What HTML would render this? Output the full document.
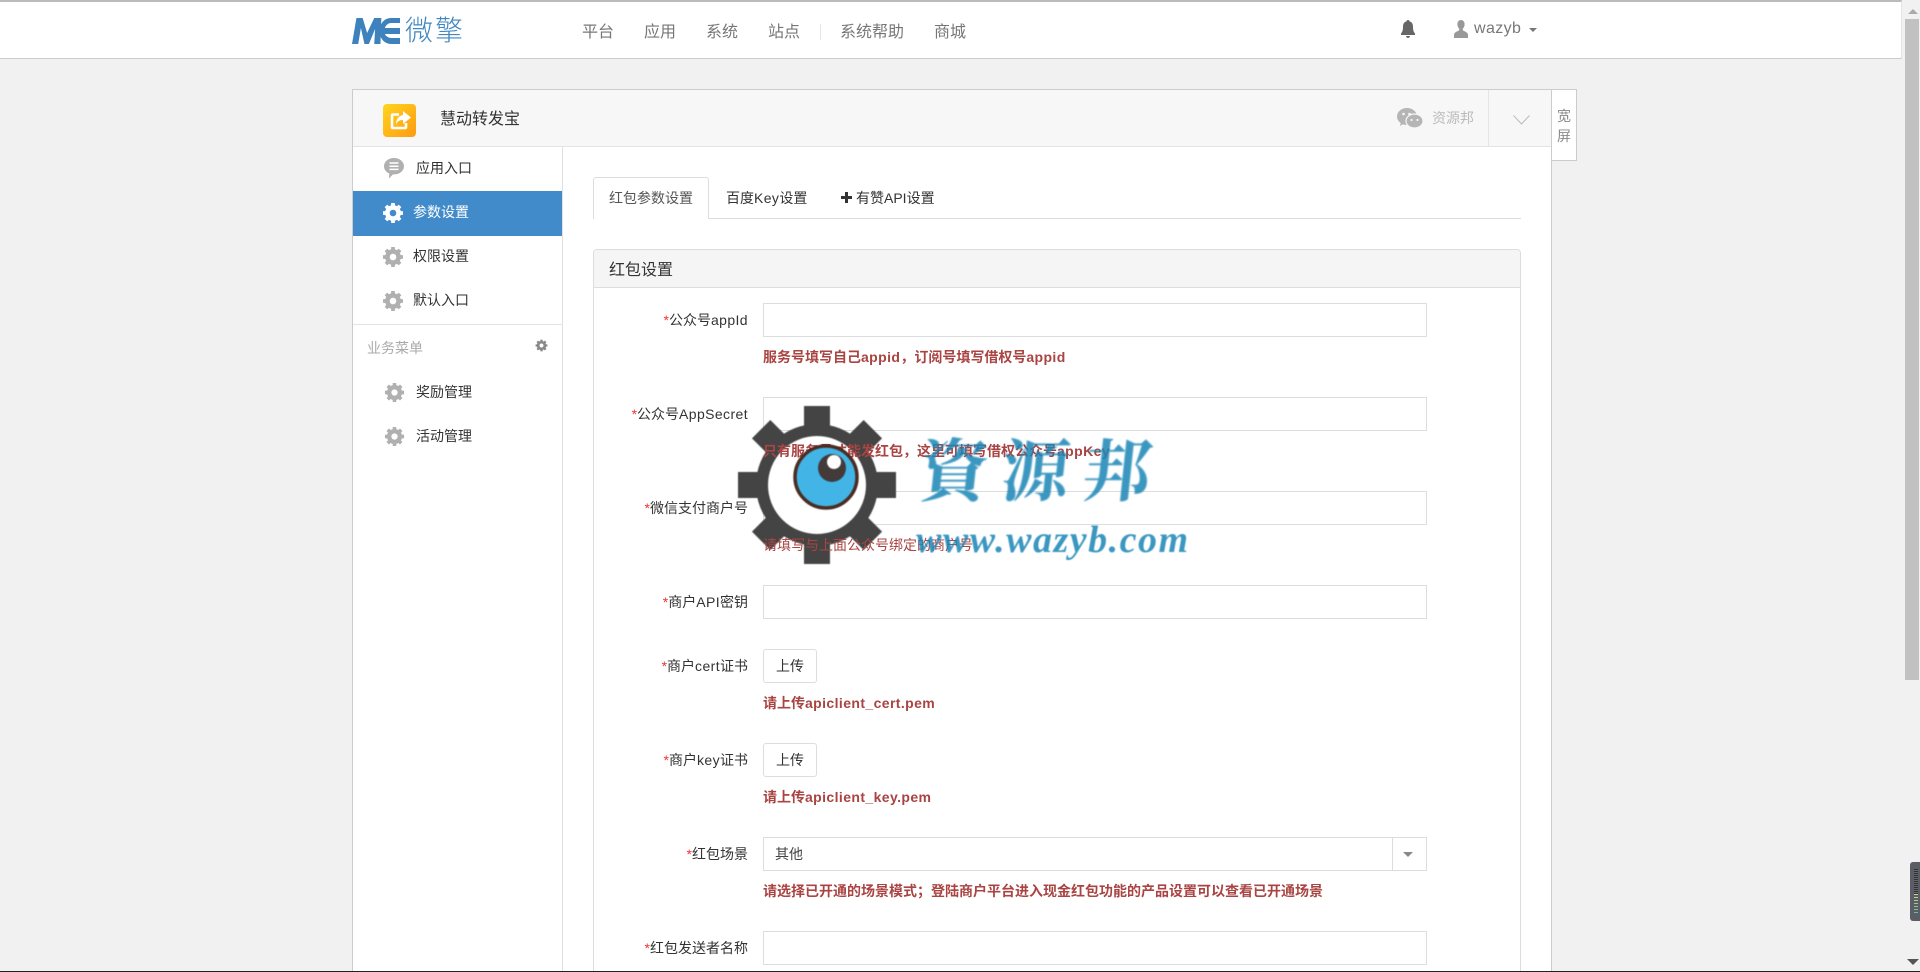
<!DOCTYPE html>
<html lang="zh-CN"><head><meta charset="utf-8"><title>慧动转发宝</title>
<style>
*{box-sizing:border-box}
html,body{margin:0;padding:0;width:1920px;height:972px;overflow:hidden;background:#f1f1f1}
body{position:relative;font:14px/20px "Liberation Sans","Noto Sans CJK SC",sans-serif;color:#333}
.a{position:absolute;white-space:nowrap}
.nav{top:22px;font-size:16px;line-height:22px;color:#777}
.side{font-size:14px;line-height:20px;color:#333}
.lab{right:1172px;height:20px;line-height:20px;color:#333;text-align:right;z-index:3}
.lab i{font-style:normal;color:#e33}
.l{letter-spacing:.4px}
.inp{left:763px;width:664px;height:34px;background:#fff;border:1px solid #ddd}
.help{left:763px;color:#a94442;font-weight:bold;line-height:20px;z-index:5}
.btn{left:763px;width:54px;height:34px;background:#fff;border:1px solid #ddd;border-radius:3px;text-align:center;line-height:32px;color:#333}
svg{display:block}
</style></head><body>
<svg width="0" height="0" style="position:absolute"><defs>
<g id="gear"><circle r="5.6" fill="none" stroke="currentColor" stroke-width="4.6"/>
<g fill="currentColor"><rect x="-1.9" y="-10" width="3.8" height="4" rx=".5"/><rect x="-1.9" y="-10" width="3.8" height="4" rx=".5" transform="rotate(45)"/><rect x="-1.9" y="-10" width="3.8" height="4" rx=".5" transform="rotate(90)"/><rect x="-1.9" y="-10" width="3.8" height="4" rx=".5" transform="rotate(135)"/><rect x="-1.9" y="-10" width="3.8" height="4" rx=".5" transform="rotate(180)"/><rect x="-1.9" y="-10" width="3.8" height="4" rx=".5" transform="rotate(225)"/><rect x="-1.9" y="-10" width="3.8" height="4" rx=".5" transform="rotate(270)"/><rect x="-1.9" y="-10" width="3.8" height="4" rx=".5" transform="rotate(315)"/></g></g>
</defs></svg>

<!-- top bar -->
<div class="a" style="left:0;top:0;width:1902px;height:59px;background:#fff;border-top:2px solid #bbb;border-bottom:1px solid #ccc;border-right:1px solid #e4e4e4"></div>
<svg class="a" style="left:352px;top:17px" width="48" height="27" viewBox="0 0 54 27" preserveAspectRatio="none"><path fill="#3d82bd" d="M0 27 5 1h7l5 15L25 1h8l-1 26h-7l1-15-7 15h-5L10 11 7 27z"/><path fill="#3d82bd" d="M54 1H44C36 1 31 7 31 14s5 13 13 13h10v-6H44c-3 0-6-2-7-4h17v-6H37c1-3 4-5 7-5h10z"/></svg>
<div class="a" style="left:405px;top:15px;font-size:28px;line-height:31px;color:#3f87c0;letter-spacing:2px;font-weight:300">微擎</div>
<div class="a nav" style="left:582px">平台</div>
<div class="a nav" style="left:644px">应用</div>
<div class="a nav" style="left:706px">系统</div>
<div class="a nav" style="left:768px">站点</div>
<div class="a" style="left:820px;top:24px;width:1px;height:16px;background:#e6e6e6"></div>
<div class="a nav" style="left:840px">系统帮助</div>
<div class="a nav" style="left:934px">商城</div>
<svg class="a" style="left:1401px;top:20px" width="14" height="18" viewBox="0 0 14 18"><path fill="#666" d="M7 0c1 0 1.5.6 1.5 1.4C11 2 12 4 12 7c0 3 .6 5 2 6.5V15H0v-1.500C1.400 12 2 10 2 7c0-3 1-5 3.500-5.600C5.500.6 6 0 7 0zM5 16h4c0 1-1 2-2 2s-2-1-2-2z"/></svg>
<svg class="a" style="left:1454px;top:20px" width="14" height="18" viewBox="0 0 14 18"><path fill="#999" d="M7 0c2.300 0 3.600 1.800 3.600 4.200 0 2-.8 3.500-1.800 4.500v1.500C10.500 11.500 14 12 14 15v3H0v-3c0-3 3.500-3.500 5.200-4.800V8.700C4.200 7.700 3.400 6.200 3.400 4.200 3.400 1.800 4.700 0 7 0z"/></svg>
<div class="a" style="left:1474px;top:18px;font-size:16px;line-height:22px;color:#777;letter-spacing:.4px">wazyb</div>
<div class="a" style="left:1529px;top:28px;width:0;height:0;border:4px solid transparent;border-top-color:#777;border-bottom:0"></div>

<!-- scrollbar -->
<div class="a" style="left:1903px;top:2px;width:17px;height:970px;background:#f1f1f1"></div>
<div class="a" style="left:1908px;top:9px;width:0;height:0;border:5px solid transparent;border-bottom:5px solid #aaa;border-top:0"></div>
<div class="a" style="left:1905px;top:19px;width:14px;height:661px;background:#c1c1c1"></div>
<div class="a" style="left:1907px;top:959px;width:0;height:0;border:6px solid transparent;border-top:6px solid #555;border-bottom:0"></div>

<!-- main panel -->
<div class="a" style="left:352px;top:89px;width:1200px;height:883px;background:#fff;border:1px solid #ccc;border-bottom:0"></div>
<div class="a" style="left:353px;top:90px;width:1198px;height:57px;background:#f7f7f7;border-bottom:1px solid #e4e4e4"></div>
<div class="a" style="left:1488px;top:90px;width:1px;height:56px;background:#e4e4e4"></div>
<div class="a" style="left:383px;top:104px;width:33px;height:33px;border-radius:4px;background:linear-gradient(135deg,#ffd51f,#ff9a12)"></div>
<svg class="a" style="left:383px;top:104px" width="33" height="33" viewBox="0 0 33 33"><path fill="none" stroke="#fff" stroke-width="2.600" d="M16 10.500H10c-.6 0-1 .4-1 1V23c0 .6.4 1 1 1h12c.6 0 1-.4 1-1v-4"/><path fill="#fff" d="M20 7l8 6.500-8 6.500v-4c-4 0-6 1.500-7 5 0-6 2.500-9 7-10z"/></svg>
<div class="a" style="left:440px;top:109px;font-size:16px;line-height:22px;color:#333">慧动转发宝</div>
<svg class="a" style="left:1397px;top:108px" width="26" height="21" viewBox="0 0 26 21"><ellipse cx="10" cy="8.500" rx="10" ry="8.500" fill="#b5b5b5"/><path fill="#b5b5b5" d="M4 14l-1 4 5-3z"/><ellipse cx="17.500" cy="13" rx="8.500" ry="7" fill="#b5b5b5" stroke="#f7f7f7" stroke-width="1.200"/><circle cx="6.500" cy="6" r="1.300" fill="#f7f7f7"/><circle cx="12.500" cy="6" r="1.300" fill="#f7f7f7"/><circle cx="14.500" cy="12" r="1.100" fill="#f7f7f7"/><circle cx="20.500" cy="12" r="1.100" fill="#f7f7f7"/></svg>
<div class="a" style="left:1432px;top:108px;color:#bbb">资源邦</div>
<svg class="a" style="left:1513px;top:115px" width="17" height="10" viewBox="0 0 17 10"><path fill="none" stroke="#bbb" stroke-width="1" d="M.5.500l8 8.500 8-8.500"/></svg>
<div class="a" style="left:1551px;top:89px;width:26px;height:72px;background:#fff;border:1px solid #ccc;color:#888;text-align:center;padding-top:16px;line-height:20px;white-space:normal;font-size:14px">宽<br>屏</div>

<!-- sidebar -->
<div class="a" style="left:562px;top:147px;width:1px;height:825px;background:#e0e0e0"></div>
<svg class="a" style="left:384px;top:158px" width="20" height="21" viewBox="0 0 20 21"><path fill="#b0b0b0" d="M10 0c5.500 0 10 3.600 10 8.200s-4.500 8.200-10 8.200h-1L5 20.500l.3-5C2 14 0 11.400 0 8.200 0 3.600 4.500 0 10 0z"/><path stroke="#fff" stroke-width="1.500" d="M5.500 5h9M5.500 8.200h9M5.500 11.400h9"/></svg>
<div class="a side" style="left:416px;top:158px">应用入口</div>
<div class="a" style="left:353px;top:191px;width:209px;height:45px;background:#428bca"></div>
<svg class="a" style="left:382px;top:202px;color:#fff" width="22" height="22" viewBox="-11 -11 22 22"><use href="#gear"/></svg>
<div class="a side" style="left:413px;top:202px;color:#fff">参数设置</div>
<svg class="a" style="left:382px;top:246px;color:#b0b0b0" width="22" height="22" viewBox="-11 -11 22 22"><use href="#gear"/></svg>
<div class="a side" style="left:413px;top:246px">权限设置</div>
<svg class="a" style="left:382px;top:290px;color:#b0b0b0" width="22" height="22" viewBox="-11 -11 22 22"><use href="#gear"/></svg>
<div class="a side" style="left:413px;top:290px">默认入口</div>
<div class="a" style="left:353px;top:324px;width:209px;height:1px;background:#e4e4e4"></div>
<div class="a side" style="left:367px;top:338px;color:#aaa">业务菜单</div>
<svg class="a" style="left:535px;top:339px;color:#888" width="13" height="13" viewBox="-11 -11 22 22"><use href="#gear"/></svg>
<svg class="a" style="left:384px;top:382px;color:#b0b0b0" width="21" height="21" viewBox="-11 -11 22 22"><use href="#gear"/></svg>
<div class="a side" style="left:416px;top:382px">奖励管理</div>
<svg class="a" style="left:384px;top:426px;color:#b0b0b0" width="21" height="21" viewBox="-11 -11 22 22"><use href="#gear"/></svg>
<div class="a side" style="left:416px;top:426px">活动管理</div>

<!-- tabs -->
<div class="a" style="left:593px;top:218px;width:928px;height:1px;background:#ddd"></div>
<div class="a" style="left:593px;top:177px;width:116px;height:42px;background:#fff;border:1px solid #ddd;border-bottom:0;border-radius:3px 3px 0 0"></div>
<div class="a" style="left:609px;top:188px;color:#555">红包参数设置</div>
<div class="a" style="left:726px;top:188px;color:#333">百度<span class="l">Key</span>设置</div>
<svg class="a" style="left:841px;top:192px" width="11" height="11" viewBox="0 0 11 11"><path fill="#333" d="M4 0h3v4h4v3H7v4H4V7H0V4h4z"/></svg>
<div class="a" style="left:856px;top:188px;color:#333">有赞API设置</div>

<!-- form panel -->
<div class="a" style="left:593px;top:249px;width:928px;height:730px;background:#fff;border:1px solid #ddd;border-radius:4px"></div>
<div class="a" style="left:594px;top:250px;width:926px;height:38px;background:#f5f5f5;border-bottom:1px solid #ddd;border-radius:3px 3px 0 0"></div>
<div class="a" style="left:609px;top:260px;font-size:16px;line-height:22px;color:#333">红包设置</div>

<div class="a lab" style="top:310px"><i>*</i>公众号<span class="l">appId</span></div>
<div class="a inp" style="top:303px"></div>
<div class="a lab" style="top:404px"><i>*</i>公众号<span class="l">AppSecret</span></div>
<div class="a inp" style="top:397px"></div>
<div class="a lab" style="top:498px"><i>*</i>微信支付商户号</div>
<div class="a inp" style="top:491px"></div>
<div class="a lab" style="top:592px"><i>*</i>商户<span class="l">API</span>密钥</div>
<div class="a inp" style="top:585px"></div>
<div class="a lab" style="top:656px"><i>*</i>商户<span class="l">cert</span>证书</div>
<div class="a btn" style="top:649px">上传</div>
<div class="a lab" style="top:750px"><i>*</i>商户<span class="l">key</span>证书</div>
<div class="a btn" style="top:743px">上传</div>
<div class="a lab" style="top:844px"><i>*</i>红包场景</div>
<div class="a inp" style="top:837px"></div>
<div class="a" style="left:775px;top:844px;color:#444">其他</div>
<div class="a" style="left:1392px;top:838px;width:1px;height:32px;background:#ddd"></div>
<div class="a" style="left:1403px;top:852px;width:0;height:0;border:5px solid transparent;border-top:5px solid #888;border-bottom:0"></div>
<div class="a lab" style="top:938px"><i>*</i>红包发送者名称</div>
<div class="a inp" style="top:931px"></div>

<!-- watermark gear (below the help text) -->
<svg class="a" style="left:737px;top:405px;z-index:4;filter:blur(.6px)" width="160" height="160" viewBox="-80 -80 160 160"><circle r="55" fill="#fff"/><g fill="#444"><circle r="55" fill="none" stroke="#444" stroke-width="12"/><rect x="-13" y="-79" width="26" height="22"/><rect x="-13" y="-79" width="26" height="22" transform="rotate(45)"/><rect x="-13" y="-79" width="26" height="22" transform="rotate(90)"/><rect x="-13" y="-79" width="26" height="22" transform="rotate(135)"/><rect x="-13" y="-79" width="26" height="22" transform="rotate(180)"/><rect x="-13" y="-79" width="26" height="22" transform="rotate(225)"/><rect x="-13" y="-79" width="26" height="22" transform="rotate(270)"/><rect x="-13" y="-79" width="26" height="22" transform="rotate(315)"/></g></svg>

<div class="a help" style="top:347px">服务号填写自己<span class="l">appid</span>，订阅号填写借权号<span class="l">appid</span></div>
<div class="a help" style="top:441px">只有服务号才能发红包，这里可填写借权公众号<span class="l">appKey</span></div>
<div class="a help" style="top:535px;font-weight:normal">请填写与上面公众号绑定的商户号</div>
<div class="a help" style="top:693px">请上传<span class="l">apiclient_cert.pem</span></div>
<div class="a help" style="top:787px">请上传<span class="l">apiclient_key.pem</span></div>
<div class="a help" style="top:881px">请选择已开通的场景模式；登陆商户平台进入现金红包功能的产品设置可以查看已开通场景</div>

<!-- watermark eye + text -->
<svg class="a" style="left:737px;top:405px;z-index:6;filter:blur(.6px)" width="160" height="160" viewBox="-80 -80 160 160"><circle cx="9" cy="-8" r="31" fill="#42b4e6" stroke="#4a2c22" stroke-width="3.500"/><circle cx="15" cy="-17" r="14" fill="#433a3a"/><circle cx="17" cy="-23" r="7" fill="#fff"/></svg>
<div class="a" style="left:920px;top:427px;z-index:6;font:bold 68px/80px 'Noto Serif CJK SC',serif;letter-spacing:14px;color:#1a86b6;opacity:.85;transform:skewX(-6deg);filter:blur(.7px)">資源邦</div>
<div class="a" style="left:916px;top:517px;z-index:6;font:italic bold 38px/46px 'Liberation Serif',serif;letter-spacing:1.500px;color:#1a86b6;opacity:.85;filter:blur(.6px)">www.wazyb.com</div>

<!-- widget on right edge -->
<div class="a" style="left:1910px;top:862px;width:10px;height:59px;background:#5a5d66;border-radius:3px 0 0 3px;z-index:7"></div>
<div class="a" style="left:1914px;top:869px;width:4px;height:25px;z-index:8;background:repeating-linear-gradient(#2f3138 0 1px,#666 1px 2px)"></div>
<div class="a" style="left:1914px;top:894px;width:4px;height:21px;z-index:8;background:repeating-linear-gradient(transparent 0 1px,#5a5d66 1px 3px),linear-gradient(#d8d878,#50c0a0)"></div>

<!-- bottom edge -->
<div class="a" style="left:0;top:971px;width:1920px;height:1px;background:#222;z-index:9"></div>
</body></html>
